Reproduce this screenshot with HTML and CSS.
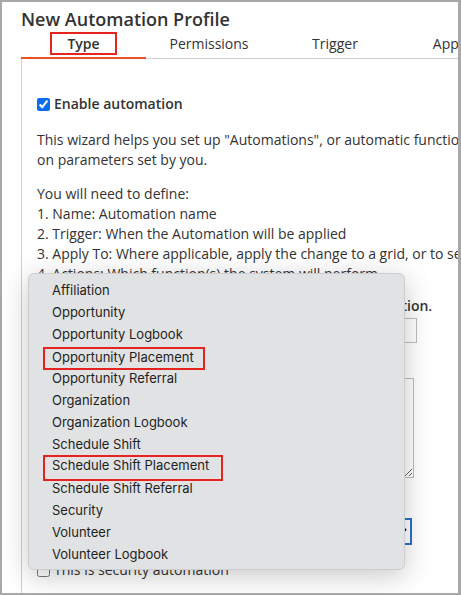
FILE: index.html
```html
<!DOCTYPE html>
<html lang="en">
<head>
    <meta charset="UTF-8">
    <meta name="viewport" content="width=device-width, initial-scale=1.0">
    <title>New Automation Profile</title>
    <link rel="stylesheet" href="styles.css">
</head>
<body>
    <div class="frame">
        <h1 class="title">New Automation Profile</h1>
        <div class="tabs">
            <div class="tab active"><span class="tab-mark">Type</span></div>
            <div class="tab">Permissions</div>
            <div class="tab">Trigger</div>
            <div class="tab">Apply To</div>
            <div class="tab">Actions</div>
        </div>
        <div class="panel">
            <label class="check strong"><input type="checkbox" checked> Enable automation</label>
            <p>This wizard helps you set up "Automations", or automatic functions based on parameters set by you.</p>
            <p class="steps">You will need to define:<br>
                1. Name: Automation name<br>
                2. Trigger: When the Automation will be applied<br>
                3. Apply To: Where applicable, apply the change to a grid, or to selected records<br>
                4. Actions: Which function(s) the system will perform.</p>
            <div class="field">
                <label class="field-label">Please select the record type used by the new automation.</label>
                <input type="text" class="text-input">
            </div>
            <div class="field">
                <label class="field-label">Description</label>
                <textarea class="text-area"></textarea>
            </div>
            <div class="field field-select">
                <label class="field-label">Record type</label>
                <select class="select-input"><option>Opportunity Placement</option></select>
            </div>
            <label class="check last"><input type="checkbox"> This is security automation</label>
        </div>

        <!-- open select list -->
        <div class="menu">
            <div class="item">Affiliation</div>
            <div class="item">Opportunity</div>
            <div class="item">Opportunity Logbook</div>
            <div class="item"><span class="mark">Opportunity Placement</span></div>
            <div class="item">Opportunity Referral</div>
            <div class="item">Organization</div>
            <div class="item">Organization Logbook</div>
            <div class="item">Schedule Shift</div>
            <div class="item"><span class="mark mark-lg">Schedule Shift Placement</span></div>
            <div class="item">Schedule Shift Referral</div>
            <div class="item">Security</div>
            <div class="item">Volunteer</div>
            <div class="item">Volunteer Logbook</div>
        </div>
    </div>
</body>
</html>
```

FILE: styles.css
```css
body {
    margin: 0;
    font-family: "Open Sans", "Liberation Sans", sans-serif;
    font-size: 14px;
    color: #333;
    background-color: #fff;
}
.frame {
    position: relative;
    width: 461px;
    height: 595px;
    box-sizing: border-box;
    border: 2px solid #a8a8a8;
    border-right-width: 3px;
    overflow: hidden;
}
.title {
    margin: 5px 0 0 19px;
    font-size: 18px;
    line-height: 24px;
    font-weight: 600;
    color: #333;
    white-space: nowrap;
}
/* tabs */
.tabs {
    display: flex;
    margin-left: 19px;
    width: 700px;
}
.tab {
    flex: 0 0 126px;
    height: 24px;
    padding-top: 3px;
    line-height: 20px;
    text-align: center;
    border-bottom: 1px solid #cfcfcf;
    white-space: nowrap;
}
.tab.active {
    flex-basis: 125px;
    font-weight: 600;
    height: 23px;
    border-bottom: 2px solid #f05323;
}
.tab-mark {
    display: inline-block;
    line-height: 19px;
    padding: 0 15px;
    margin-top: -2px;
    border: 2px solid #e5231f;
    vertical-align: top;
}
/* panel */
.panel {
    margin-left: 19px;
    width: 485px;
    height: 600px;
    padding: 35px 0 0 15px;
    border-left: 1px solid #d0d0d0;
    line-height: 20px;
}
.panel p {
    margin: 16px 0 0;
}
.panel p.steps {
    margin-top: 14px;
    white-space: nowrap;
}
.check {
    display: flex;
    align-items: center;
    gap: 4px;
    white-space: nowrap;
}
.check input {
    width: 13px;
    height: 13px;
    margin: 0;
    accent-color: #0a6cf0;
}
.check.strong {
    font-weight: 600;
}
.check.last {
    margin-top: 15px;
}
.field {
    margin-top: 12px;
}
.field-select {
    margin-top: 18px;
}
.field-label {
    display: block;
    font-weight: 600;
    white-space: nowrap;
}
.text-input {
    display: block;
    margin-top: 2px;
    width: 380px;
    height: 25px;
    box-sizing: border-box;
    border: 1px solid #bdbdbd;
}
.text-area {
    display: block;
    margin-top: 3px;
    width: 377px;
    height: 100px;
    box-sizing: border-box;
    border: 1px solid #bdbdbd;
}
.select-input {
    display: block;
    margin-top: 2px;
    width: 375px;
    height: 27px;
    box-sizing: border-box;
    border: 2px solid #2a72cc;
    background-color: #fff;
}
/* dropdown list */
.menu {
    position: absolute;
    left: 26px;
    top: 271px;
    width: 377px;
    height: 297px;
    box-sizing: border-box;
    padding: 5px 0 4px;
    background-color: #e1e2e4;
    border: 1px solid #cdcdd0;
    border-radius: 6px;
    box-shadow: 0 6px 28px rgba(0, 0, 0, 0.22);
    font-family: Inter, "Liberation Sans", sans-serif;
    font-size: 13px;
    color: #1f1f21;
}
.item {
    height: 22px;
    line-height: 22px;
    padding-left: 23px;
    white-space: nowrap;
}
.mark {
    display: inline-block;
    vertical-align: top;
    margin: 2px 0 0 -9px;
    padding: 0 9px 3px 7px;
    line-height: 16px;
    border: 2px solid #e5231f;
}
.mark-lg {
    margin-top: 0;
    padding: 0 12px 6px 7px;
}
```
